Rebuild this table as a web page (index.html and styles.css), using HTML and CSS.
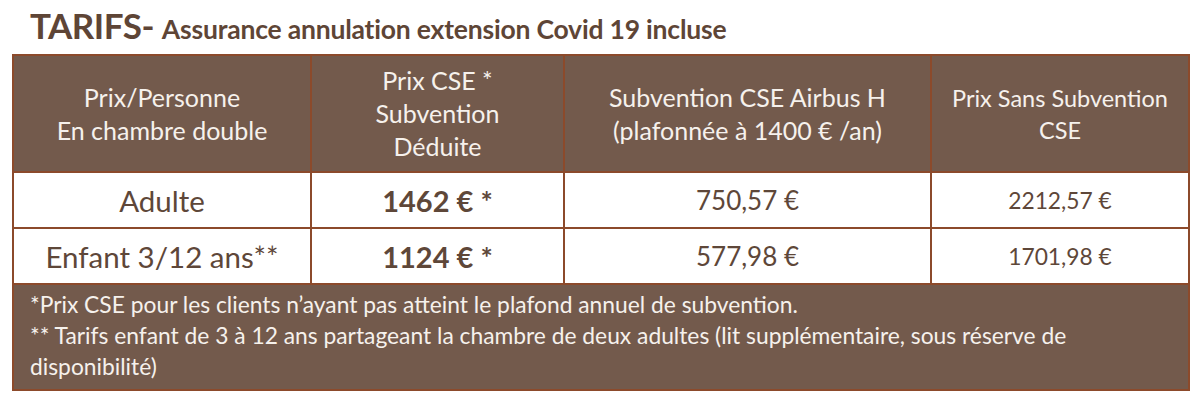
FILE: index.html
```html
<!DOCTYPE html>
<html lang="fr">
<head>
<meta charset="utf-8">
<link rel="stylesheet" href="styles.css">
</head>
<body>
<div class="page">
  <h1 class="title"><span class="title-main">TARIFS-</span> <span class="title-sub">Assurance annulation extension Covid 19 incluse</span></h1>
  <table class="tarifs">
    <colgroup>
      <col class="c1"><col class="c2"><col class="c3"><col class="c4">
    </colgroup>
    <thead>
      <tr class="head">
        <th class="h-big">Prix/Personne<br>En chambre double</th>
        <th class="h-big">Prix CSE *<br>Subvention<br>Déduite</th>
        <th class="h-big">Subvention CSE Airbus H<br>(plafonnée à 1400 € /an)</th>
        <th class="h-small">Prix Sans Subvention<br>CSE</th>
      </tr>
    </thead>
    <tbody>
      <tr class="row">
        <td class="label">Adulte</td>
        <td class="price">1462 € *</td>
        <td class="sub">750,57 €</td>
        <td class="full">2212,57 €</td>
      </tr>
      <tr class="row">
        <td class="label">Enfant 3/12 ans**</td>
        <td class="price">1124 € *</td>
        <td class="sub">577,98 €</td>
        <td class="full">1701,98 €</td>
      </tr>
      <tr class="foot">
        <td colspan="4">*Prix CSE pour les clients n’ayant pas atteint le plafond annuel de subvention.<br>** Tarifs enfant de 3 à 12 ans partageant la chambre de deux adultes (lit supplémentaire, sous réserve de disponibilité)</td>
      </tr>
    </tbody>
  </table>
</div>
</body>
</html>
```

FILE: styles.css
```css
html, body {
  margin: 0;
  padding: 0;
  background: #ffffff;
}

.page {
  width: 1200px;
  height: 402px;
  padding: 0 0 0 12px;
  box-sizing: border-box;
  font-family: "Lato", "Liberation Sans", sans-serif;
}

.title {
  margin: 0;
  padding: 5px 0 0 18px;
  height: 54px;
  box-sizing: border-box;
  color: #5e4536;
  font-weight: 700;
  line-height: 40px;
  white-space: nowrap;
}

.title-main {
  font-size: 35px;
  letter-spacing: -0.5px;
}

.title-sub {
  font-size: 26.5px;
  letter-spacing: -0.2px;
}

.tarifs {
  width: 1176px;
  border-collapse: collapse;
  table-layout: fixed;
  border: 2px solid #8c4a2b;
}

.c1 { width: 298px; }
.c2 { width: 253px; }
.c3 { width: 367px; }
.c4 { width: 258px; }

.tarifs th,
.tarifs td {
  border: 2px solid #8c4a2b;
  padding: 0;
  text-align: center;
  vertical-align: middle;
}

.head th {
  background: #735a4c;
  color: #f6f1ec;
  font-weight: 400;
  height: 115px;
}

.h-big {
  font-size: 25px;
  line-height: 33px;
}

.h-small {
  font-size: 23.5px;
  line-height: 32px;
}

.row td {
  height: 54px;
  color: #5e4739;
}

.label {
  font-size: 29.5px;
}

.price {
  font-size: 29px;
  font-weight: 700;
}

.sub {
  font-size: 26px;
}

.full {
  font-size: 22.8px;
}

.foot td {
  background: #735a4c;
  color: #f6f1ec;
  text-align: left;
  font-size: 22.8px;
  line-height: 31px;
  padding: 4px 16px 6px 16px;
  height: 94px;
  vertical-align: top;
}
```
